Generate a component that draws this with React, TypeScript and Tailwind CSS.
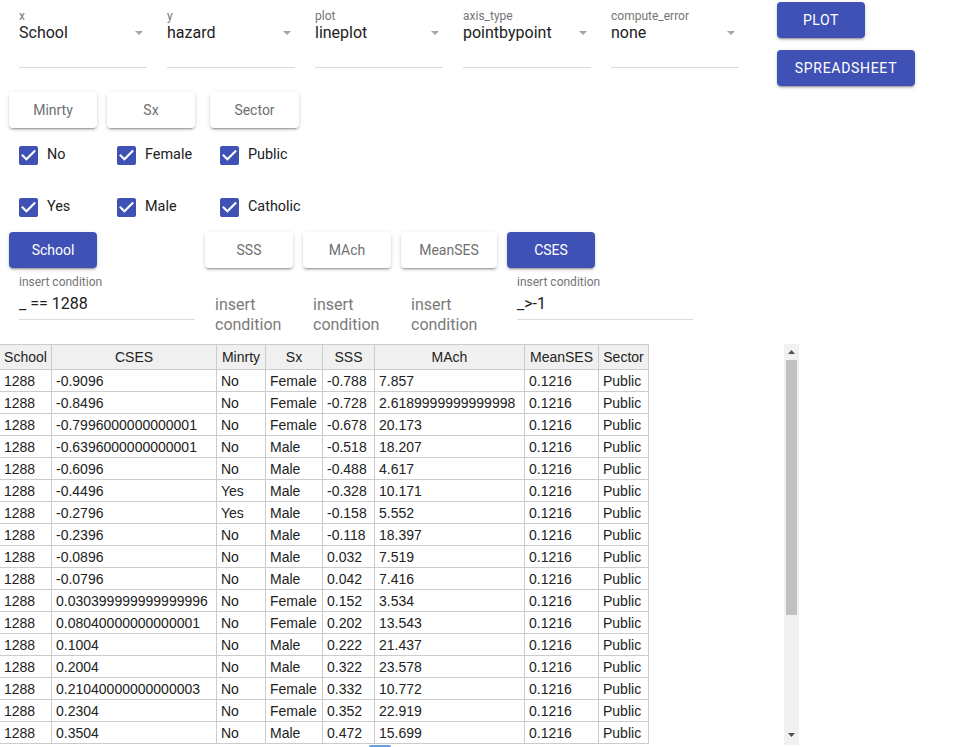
import React from "react";

const selects = [
  { label: "x", value: "School" },
  { label: "y", value: "hazard" },
  { label: "plot", value: "lineplot" },
  { label: "axis_type", value: "pointbypoint" },
  { label: "compute_error", value: "none" },
];

const rows: string[][] = [
  ["1288", "-0.9096", "No", "Female", "-0.788", "7.857"],
  ["1288", "-0.8496", "No", "Female", "-0.728", "2.6189999999999998"],
  ["1288", "-0.7996000000000001", "No", "Female", "-0.678", "20.173"],
  ["1288", "-0.6396000000000001", "No", "Male", "-0.518", "18.207"],
  ["1288", "-0.6096", "No", "Male", "-0.488", "4.617"],
  ["1288", "-0.4496", "Yes", "Male", "-0.328", "10.171"],
  ["1288", "-0.2796", "Yes", "Male", "-0.158", "5.552"],
  ["1288", "-0.2396", "No", "Male", "-0.118", "18.397"],
  ["1288", "-0.0896", "No", "Male", "0.032", "7.519"],
  ["1288", "-0.0796", "No", "Male", "0.042", "7.416"],
  ["1288", "0.030399999999999996", "No", "Female", "0.152", "3.534"],
  ["1288", "0.08040000000000001", "No", "Female", "0.202", "13.543"],
  ["1288", "0.1004", "No", "Male", "0.222", "21.437"],
  ["1288", "0.2004", "No", "Male", "0.322", "23.578"],
  ["1288", "0.21040000000000003", "No", "Female", "0.332", "10.772"],
  ["1288", "0.2304", "No", "Female", "0.352", "22.919"],
  ["1288", "0.3504", "No", "Male", "0.472", "15.699"],
];

const headers = ["School", "CSES", "Minrty", "Sx", "SSS", "MAch", "MeanSES", "Sector"];
const gridCols = "grid grid-cols-[52px_165px_49px_57px_52px_150px_74px_50px]";

function Arrow() {
  return (
    <svg width="8" height="4" viewBox="0 0 8 4" className="mr-[4px]">
      <path d="M0 0 L8 0 L4 4 Z" fill="#a6a6a6" />
    </svg>
  );
}

function Select({ label, value }: { label: string; value: string }) {
  return (
    <div className="w-[128px] h-[68px] border-b border-[#dcdcdc] pt-[10px]">
      <div className="text-[12px] leading-[12px] text-[#757575]">{label}</div>
      <div className="mt-[1px] flex items-center justify-between h-[19px]">
        <span className="text-[16px] leading-[19px] text-[#212121]">{value}</span>
        <Arrow />
      </div>
    </div>
  );
}

const shadow =
  "shadow-[0_3px_1px_-2px_rgba(0,0,0,0.2),0_2px_2px_0_rgba(0,0,0,0.14),0_1px_5px_0_rgba(0,0,0,0.12)]";

function WhiteBtn({ children, w }: { children: React.ReactNode; w: string }) {
  return (
    <div
      className={`${w} h-[36px] rounded-[4px] bg-white ${shadow} flex items-center justify-center text-[14px] text-[#6f6f6f]`}
    >
      {children}
    </div>
  );
}

function BlueBtn({ children, w }: { children: React.ReactNode; w: string }) {
  return (
    <div
      className={`${w} h-[36px] rounded-[4px] bg-[#3f51b5] ${shadow} flex items-center justify-center text-[14px] text-white`}
    >
      {children}
    </div>
  );
}

function Check({ label }: { label: string }) {
  return (
    <div className="h-[52px] flex items-center pl-[10px] pt-[2px] gap-[9px]">
      <svg width="19" height="19" viewBox="3 3 18 18">
        <path
          fill="#3f51b5"
          d="M19 3H5c-1.11 0-2 .9-2 2v14c0 1.1.89 2 2 2h14c1.11 0 2-.9 2-2V5c0-1.1-.89-2-2-2zm-9 14l-5-5 1.41-1.41L10 14.17l7.59-7.59L19 8l-9 9z"
        />
      </svg>
      <span className="text-[14.4px] text-[#212121]">{label}</span>
    </div>
  );
}

function CondInput({ value }: { value: string }) {
  return (
    <div className="ml-[10px] w-[176px] pt-[8px] pb-[6px] border-b border-[#dcdcdc]">
      <div className="text-[12px] leading-[12px] text-[#757575]">insert condition</div>
      <div className="mt-[6px] text-[16px] leading-[19px] text-[#212121]">{value}</div>
    </div>
  );
}

function Placeholder() {
  return (
    <div className="pl-[10px] pt-[27px] w-[88px] text-[16px] leading-[20px] text-[#7a7a7a]">
      insert condition
    </div>
  );
}

export default function App() {
  return (
    <div className="font-['Roboto',sans-serif] bg-white w-[978px]">
      {/* Row 1 */}
      <div className="flex items-start h-[86px]">
        <div className="flex gap-[20px] pl-[19px]">
          {selects.map((s) => (
            <Select key={s.label} label={s.label} value={s.value} />
          ))}
        </div>
        <div className="ml-[38px] pt-[2px] flex flex-col gap-[12px]">
          <BlueBtn w="w-[88px]">
            <span className="tracking-[0.6px]">PLOT</span>
          </BlueBtn>
          <BlueBtn w="w-[138px]">
            <span className="tracking-[0.7px]">SPREADSHEET</span>
          </BlueBtn>
        </div>
      </div>

      {/* Row 2 */}
      <div className="mt-[6px] flex pl-[9px]">
        <div className="w-[98px]">
          <WhiteBtn w="w-[88px]">Minrty</WhiteBtn>
          <Check label="No" />
          <Check label="Yes" />
        </div>
        <div className="w-[103px]">
          <WhiteBtn w="w-[88px]">Sx</WhiteBtn>
          <Check label="Female" />
          <Check label="Male" />
        </div>
        <div>
          <WhiteBtn w="w-[89px]">Sector</WhiteBtn>
          <Check label="Public" />
          <Check label="Catholic" />
        </div>
      </div>

      {/* Row 3 */}
      <div className="h-[112px] flex items-start pl-[9px]">
        <div className="w-[196px]">
          <BlueBtn w="w-[88px]">School</BlueBtn>
          <CondInput value="_ == 1288" />
        </div>
        <div className="w-[98px]">
          <WhiteBtn w="w-[88px]">SSS</WhiteBtn>
          <Placeholder />
        </div>
        <div className="w-[98px]">
          <WhiteBtn w="w-[88px]">MAch</WhiteBtn>
          <Placeholder />
        </div>
        <div className="w-[106px]">
          <WhiteBtn w="w-[96px]">MeanSES</WhiteBtn>
          <Placeholder />
        </div>
        <div>
          <BlueBtn w="w-[88px]">CSES</BlueBtn>
          <CondInput value="_>-1" />
        </div>
      </div>

      {/* Table */}
      <div className="flex w-[799px] h-[401px]">
        <div className="flex-1 overflow-hidden font-['Liberation_Sans',Arial,sans-serif] text-[14px] text-[#222]">
          <div className={`${gridCols} w-[649px] h-[26px] border-t border-[#ccc] bg-[#f0f0f0]`}>
            {headers.map((h) => (
              <div
                key={h}
                className="border-r border-b border-[#ccc] flex items-center justify-center leading-[16px]"
              >
                {h}
              </div>
            ))}
          </div>
          {rows.map((r, i) => (
            <div key={i} className={`${gridCols} w-[649px] h-[22px] bg-white`}>
              {[...r, "0.1216", "Public"].map((c, j) => (
                <div
                  key={j}
                  className="border-r border-b border-[#ccc] pl-[4px] flex items-center whitespace-nowrap overflow-hidden leading-[16px]"
                >
                  {c}
                </div>
              ))}
            </div>
          ))}
        </div>
        <div className="w-[15px] h-full bg-[#f1f1f1] flex flex-col">
          <div className="h-[16px] flex items-center justify-center">
            <svg width="7" height="4" viewBox="0 0 7 4">
              <path d="M0 4 L7 4 L3.5 0 Z" fill="#505050" />
            </svg>
          </div>
          <div className="mx-[2px] h-[255px] bg-[#c1c1c1]" />
          <div className="flex-1" />
          <div className="h-[18px] flex items-start justify-center pt-[6px]">
            <svg width="7" height="4" viewBox="0 0 7 4">
              <path d="M0 0 L7 0 L3.5 4 Z" fill="#505050" />
            </svg>
          </div>
        </div>
      </div>
      <div className="ml-[369px] w-[22px] h-[4px] bg-[#6c9ee8] rounded-t-[2px]" />
    </div>
  );
}
